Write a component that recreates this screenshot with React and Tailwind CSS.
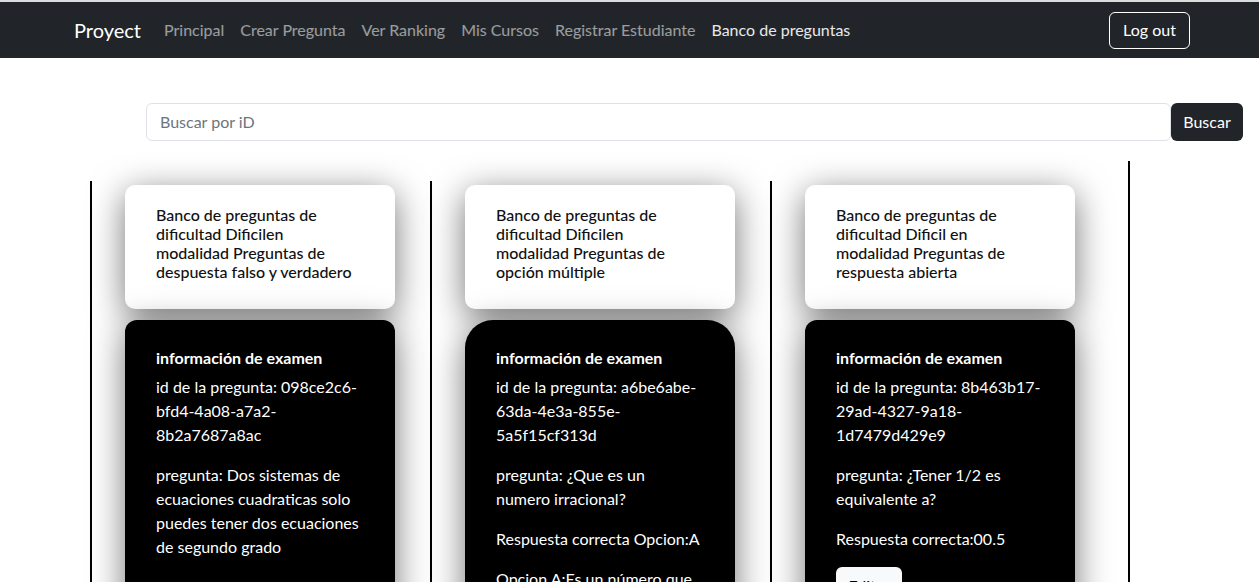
import React from "react";

const font = { fontFamily: '"Lato", "Liberation Sans", sans-serif' };

function InfoCard({ title, radius, id, pregunta, rest }) {
  return (
    <div className="w-[270px] flex flex-col">
      <div className="bg-white rounded-[10px] shadow-[0_8px_35px_rgba(0,0,0,0.55)] pl-[31px] pr-[35px] pt-[20px] pb-[28px]">
        <h6 className="text-[16px] leading-[19px] font-medium text-[#111]">{title}</h6>
      </div>
      <div className={`mt-[11px] bg-black text-white ${radius} shadow-[0_8px_35px_rgba(0,0,0,0.55)] pl-[31px] pr-[33px] pt-[28px] pb-[20px]`}>
        <h6 className="text-[16px] leading-[19px] font-bold mb-[8px]">información de examen</h6>
        <p className="text-[16px] leading-[24px] mb-[16px]">id de la pregunta: {id}</p>
        <p className="text-[16px] leading-[24px] mb-[16px]">pregunta: {pregunta}</p>
        {rest}
      </div>
    </div>
  );
}

export default function App() {
  return (
    <div className="min-h-[582px] bg-white" style={font}>
      <nav className="border-t-2 border-[#dcdcdc] bg-[#212529] h-[58px] flex items-center pl-[74px] pr-[69px]">
        <span className="text-white text-[20px] mr-[23px]">Proyect</span>
        <div className="flex gap-[16px] text-[16px]">
          <span className="text-white/55">Principal</span>
          <span className="text-white/55">Crear Pregunta</span>
          <span className="text-white/55">Ver Ranking</span>
          <span className="text-white/55">Mis Cursos</span>
          <span className="text-white/55">Registrar Estudiante</span>
          <span className="text-white/90">Banco de preguntas</span>
        </div>
        <button className="ml-auto h-[37px] w-[81px] border border-white rounded-[6px] text-white text-[16px]">Log out</button>
      </nav>

      <div className="flex pl-[146px] mt-[45px]">
        <div className="w-[1025px] h-[38px] border border-[#dee2e6] rounded-[6px] flex items-center px-[13px] text-[16px] text-[#6c757d]">
          Buscar por iD
        </div>
        <button className="w-[72px] h-[38px] bg-[#212529] text-white rounded-[6px] text-[16px]">Buscar</button>
      </div>

      <div className="ml-[90px] mt-[20px] w-[1040px] border-r-2 border-black flex">
        <div className="w-[340px] mt-[20px] border-l-2 border-black pl-[33px] pt-[4px]">
          <InfoCard
            title="Banco de preguntas de dificultad Dificilen modalidad Preguntas de despuesta falso y verdadero"
            radius="rounded-[12px]"
            id="098ce2c6-bfd4-4a08-a7a2-8b2a7687a8ac"
            pregunta="Dos sistemas de ecuaciones cuadraticas solo puedes tener dos ecuaciones de segundo grado"
            rest={<p className="text-[16px] leading-[24px] mb-[16px]">Respuesta correcta:Verdadero</p>}
          />
        </div>
        <div className="w-[340px] mt-[20px] border-l-2 border-black pl-[33px] pt-[4px]">
          <InfoCard
            title="Banco de preguntas de dificultad Dificilen modalidad Preguntas de opción múltiple"
            radius="rounded-[28px]"
            id="a6be6abe-63da-4e3a-855e-5a5f15cf313d"
            pregunta="¿Que es un numero irracional?"
            rest={
              <>
                <p className="text-[16px] leading-[24px] mb-[16px]">Respuesta correcta Opcion:A</p>
                <p className="text-[16px] leading-[24px] mb-[16px]">Opcion A:Es un número que no puede expresarse como fracción</p>
              </>
            }
          />
        </div>
        <div className="w-[340px] mt-[20px] border-l-2 border-black pl-[33px] pt-[4px]">
          <InfoCard
            title="Banco de preguntas de dificultad Dificil en modalidad Preguntas de respuesta abierta"
            radius="rounded-[12px]"
            id="8b463b17-29ad-4327-9a18-1d7479d429e9"
            pregunta="¿Tener 1/2 es equivalente a?"
            rest={
              <>
                <p className="text-[16px] leading-[24px] mb-[16px]">Respuesta correcta:00.5</p>
                <button className="w-[66px] h-[38px] bg-[#f8f9fa] text-black rounded-[6px] text-[16px]">Editar</button>
              </>
            }
          />
        </div>
      </div>
    </div>
  );
}
